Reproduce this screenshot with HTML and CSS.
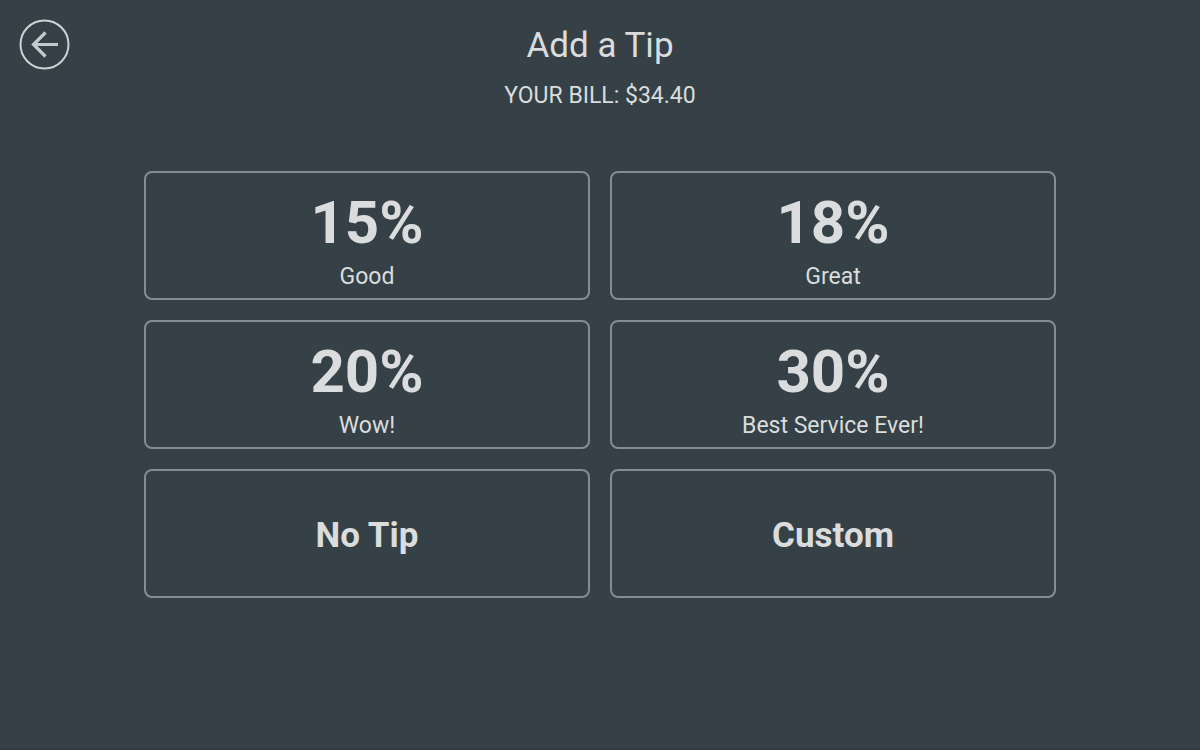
FILE: index.html
```html
<!DOCTYPE html>
<html lang="en">
<head>
    <meta charset="UTF-8">
    <meta name="viewport" content="width=device-width, initial-scale=1.0">
    <title>Add a Tip</title>
    <link rel="stylesheet" href="styles.css">
</head>
<body>
    <header class="header">
        <button class="back-btn" type="button" aria-label="Back">
            <svg class="back-icon" viewBox="0 0 50 50" aria-hidden="true">
                <circle cx="24.5" cy="24.5" r="24"/>
                <path class="arrow" d="M38 24.5H14M25.5 12.5L13.5 24.5L25.5 36.5"/>
            </svg>
        </button>
        <div class="heading">
            <h1 class="title">Add a Tip</h1>
            <p class="bill">YOUR BILL: $34.40</p>
        </div>
    </header>
    <main class="tip-grid">
        <button class="tip-btn" type="button">
            <span class="percent">15%</span>
            <span class="label">Good</span>
        </button>
        <button class="tip-btn" type="button">
            <span class="percent">18%</span>
            <span class="label">Great</span>
        </button>
        <button class="tip-btn" type="button">
            <span class="percent">20%</span>
            <span class="label">Wow!</span>
        </button>
        <button class="tip-btn" type="button">
            <span class="percent">30%</span>
            <span class="label">Best Service Ever!</span>
        </button>
        <button class="tip-btn other" type="button">No Tip</button>
        <button class="tip-btn other" type="button">Custom</button>
    </main>
</body>
</html>
```
FILE: styles.css
```css
* {
    box-sizing: border-box;
}
body {
    margin: 0;
    min-height: 100vh;
    background-color: #354146;
    border-bottom: 2px solid #313c42;
    color: #dadcdd;
    font-family: Roboto, sans-serif;
}
.header {
    display: grid;
    grid-template-columns: 50px 1fr 50px; /* Empty last column keeps the heading centered */
    padding: 20px 20px 0;
}
.back-btn {
    width: 50px;
    height: 50px;
    padding: 0;
    border: none;
    border-radius: 50%;
    background-color: transparent;
    cursor: pointer;
}
.back-icon {
    display: block;
    width: 50px;
    height: 50px;
    overflow: visible;
    fill: none;
    stroke: #cdd2d3;
    stroke-width: 2;
}
.arrow {
    stroke: #c3caca;
    stroke-width: 3.2;
}
.heading {
    text-align: center;
}
.title {
    margin: 0;
    font-size: 35px;
    font-weight: 400;
    line-height: 52px;
}
.bill {
    margin: 10px 0 0;
    font-size: 23px;
    line-height: 28px;
}
.tip-grid {
    display: grid;
    grid-template-columns: 1fr 1fr;
    grid-auto-rows: minmax(129px, auto);
    gap: 20px;
    width: 76%;
    margin: 61px auto 0;
}
.tip-btn {
    display: flex;
    flex-direction: column;
    align-items: center;
    justify-content: center;
    padding: 11px 10px 6px;
    border: 2px solid #848d91;
    border-radius: 8px;
    background-color: transparent;
    color: #dadcdd;
    font-family: inherit;
    cursor: pointer;
}
.tip-btn:hover {
    background-color: #3f4b51;
}
.percent {
    font-size: 60px;
    font-weight: 700;
    line-height: 78px;
}
.label {
    font-size: 23px;
    line-height: 30px;
}
.other {
    padding: 14px 10px 10px;
    font-size: 35px;
    font-weight: 700;
}
```
